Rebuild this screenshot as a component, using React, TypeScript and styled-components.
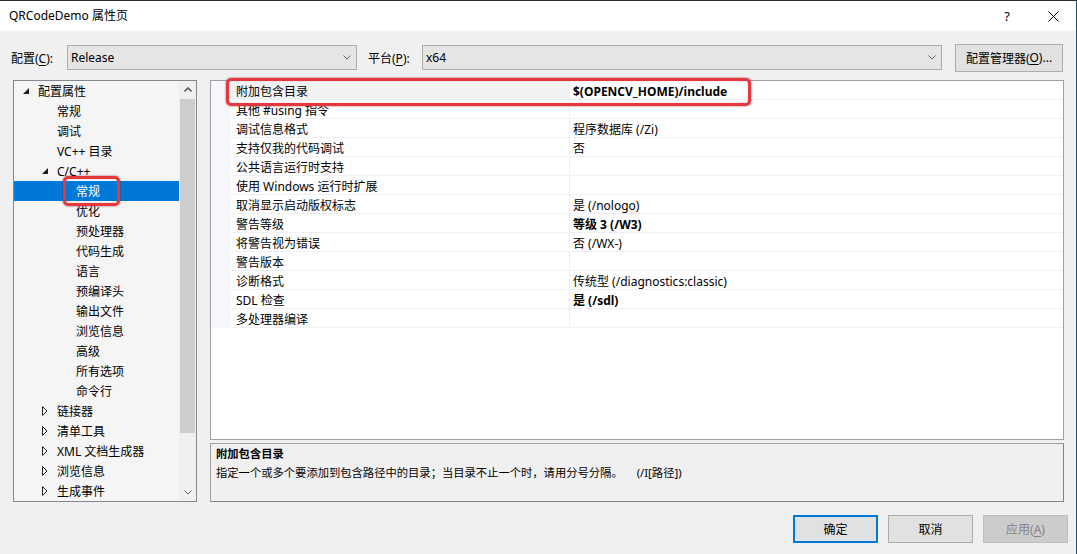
import React from 'react';
import styled, { createGlobalStyle, css } from 'styled-components';

const GlobalStyle = createGlobalStyle`
  html, body { margin: 0; padding: 0; background: #1d4f6e; }
  body {
    font-family: "Noto Sans", "Noto Sans CJK SC", sans-serif;
    font-size: 12px;
    color: #000;
  }
  * { box-sizing: border-box; }
`;

const Window = styled.div`
  width: 1076px;
  height: 554px;
  background: #f0f0f0;
  border-top: 1px solid #2e2e2e;
  display: flex;
  flex-direction: column;
  overflow: hidden;
`;

const TitleBar = styled.div`
  height: 30px;
  background: #fff;
  display: flex;
  align-items: center;
  padding-left: 9px;
  flex: none;
`;

const TitleText = styled.div`
  flex: 1;
  font-size: 12px;
  line-height: 30px;
`;

const CaptionButton = styled.div`
  width: 46px;
  height: 30px;
  display: flex;
  align-items: center;
  justify-content: center;
  font-size: 13px;
`;

const ConfigRow = styled.div`
  display: flex;
  align-items: center;
  height: 27px;
  margin-top: 13px;
  padding-left: 11px;
  flex: none;
`;

const Label = styled.div<{ $w: number; $ml?: number }>`
  width: ${p => p.$w}px;
  margin-left: ${p => p.$ml ?? 0}px;
  flex: none;
  white-space: nowrap;
`;

const U = styled.span`
  text-decoration: underline;
  text-underline-offset: 2px;
`;

const Combo = styled.div<{ $w: number }>`
  width: ${p => p.$w}px;
  height: 25px;
  flex: none;
  background: #e5e5e5;
  border: 1px solid #acacac;
  display: flex;
  align-items: center;
  padding: 0 5px 0 3px;
`;

const ComboText = styled.div`
  flex: 1;
`;

const PushButton = styled.div<{ $w: number; $default?: boolean; $disabled?: boolean; $ml?: number }>`
  width: ${p => p.$w}px;
  height: 28px;
  flex: none;
  margin-left: ${p => p.$ml ?? 0}px;
  background: #e1e1e1;
  border: 1px solid #adadad;
  display: flex;
  align-items: center;
  justify-content: center;
  white-space: nowrap;
  ${p => p.$default && css`
    border: 2px solid #0078d7;
  `}
  ${p => p.$disabled && css`
    background: #cccccc;
    border-color: #bfbfbf;
    color: #838383;
  `}
`;

const Main = styled.div`
  display: flex;
  margin-top: 9px;
  padding-left: 13px;
  gap: 13px;
  flex: none;
`;

const TreePanel = styled.div`
  position: relative;
  width: 184px;
  height: 422px;
  border: 1px solid #828790;
  background: #f5f5f5;
  display: flex;
`;

const TreeList = styled.div`
  flex: 1;
  overflow: hidden;
  display: flex;
  flex-direction: column;
`;

const TreeRow = styled.div<{ $level: number; $selected?: boolean }>`
  height: 20px;
  flex: none;
  display: flex;
  align-items: center;
  padding-left: ${p => 5 + p.$level * 19}px;
  white-space: nowrap;
  ${p => p.$selected && css`
    background: #0078d7;
    color: #fff;
  `}
`;

const ToggleBox = styled.div`
  width: 19px;
  height: 20px;
  flex: none;
  display: flex;
  align-items: center;
  padding-left: 4px;
`;

const ScrollBar = styled.div`
  width: 17px;
  flex: none;
  background: #f0f0f0;
  display: flex;
  flex-direction: column;
`;

const ScrollArrow = styled.div`
  height: 17px;
  flex: none;
  display: flex;
  align-items: center;
  justify-content: center;
`;

const ScrollTrack = styled.div`
  flex: 1;
  padding: 1px 1px 0 1px;
`;

const ScrollThumb = styled.div`
  height: 334px;
  background: #cdcdcd;
`;

const Highlight = styled.div`
  position: absolute;
  border: 3px solid #e5383e;
  border-radius: 5px;
  box-shadow: 0 0 2px rgba(140, 20, 20, 0.8), inset 0 0 1px rgba(140, 20, 20, 0.6);
  pointer-events: none;
`;

const RightColumn = styled.div`
  width: 854px;
  display: flex;
  flex-direction: column;
  gap: 3px;
`;

const GridPanel = styled.div`
  position: relative;
  height: 360px;
  background: #fff;
  border: 1px solid #a0a0a0;
  display: flex;
  flex-direction: column;
`;

const GridRow = styled.div`
  height: 19px;
  display: flex;
  flex: none;
`;

const Gutter = styled.div`
  width: 20px;
  flex: none;
  background: #f5f7fa;
`;

const cellText = css`
  padding-top: 3px;
  line-height: 15px;
  border-bottom: 1px solid #eef0f4;
  white-space: nowrap;
`;

const NameCell = styled.div<{ $active?: boolean }>`
  ${cellText}
  width: 339px;
  flex: none;
  padding-left: 5px;
  border-right: 1px solid #eef0f4;
  background: ${p => (p.$active ? '#f2f2f2' : '#fff')};
`;

const ValueCell = styled.div<{ $bold?: boolean }>`
  ${cellText}
  flex: 1;
  padding-left: 3px;
  font-weight: ${p => (p.$bold ? 700 : 400)};
`;

const DescPanel = styled.div`
  height: 59px;
  background: #f0f0f0;
  border: 1px solid #a0a0a0;
  border-right-color: #838383;
  border-bottom-color: #838383;
  padding: 0 5px;
  font-size: 11.3px;
`;

const DescTitle = styled.div`
  font-weight: 700;
  line-height: 19px;
`;

const DescText = styled.div`
  line-height: 19px;
  white-space: nowrap;
`;

const DescSwitch = styled.span`
  margin-left: 14px;
`;

const Footer = styled.div`
  display: flex;
  justify-content: flex-end;
  gap: 10px;
  margin-top: 13px;
  padding-right: 8px;
  flex: none;
`;

const Chevron = ({ dir, w = 8 }: { dir: 'up' | 'down'; w?: number }) => (
  <svg width={w} height={5} viewBox="0 0 8 5">
    <polyline
      points={dir === 'down' ? '0.5,0.5 4,4 7.5,0.5' : '0.5,4.5 4,1 7.5,4.5'}
      fill="none"
      stroke="#606060"
      strokeWidth={dir === 'down' ? 1 : 1.6}
    />
  </svg>
);

const OpenTriangle = () => (
  <svg width={6} height={6} viewBox="0 0 6 6">
    <polygon points="6,0 6,6 0,6" fill="#1e1e1e" />
  </svg>
);

const ClosedTriangle = () => (
  <svg width={6} height={10} viewBox="0 0 6 10">
    <polygon points="0.5,0.5 5,5 0.5,9.5" fill="none" stroke="#1e1e1e" strokeWidth={1} />
  </svg>
);

const CloseIcon = () => (
  <svg width={11} height={11} viewBox="0 0 11 11">
    <path d="M0.5 0.5 L10.5 10.5 M10.5 0.5 L0.5 10.5" stroke="#000" strokeWidth={1} />
  </svg>
);

type TreeNode = { label: string; level: number; toggle?: 'open' | 'closed'; selected?: boolean };

const leaf2 = ['优化', '预处理器', '代码生成', '语言', '预编译头', '输出文件', '浏览信息', '高级', '所有选项', '命令行'];

const treeNodes: TreeNode[] = [
  { label: '配置属性', level: 0, toggle: 'open' },
  { label: '常规', level: 1 },
  { label: '调试', level: 1 },
  { label: 'VC++ 目录', level: 1 },
  { label: 'C/C++', level: 1, toggle: 'open' },
  { label: '常规', level: 2, selected: true },
  ...leaf2.map(l => ({ label: l, level: 2 })),
  { label: '链接器', level: 1, toggle: 'closed' },
  { label: '清单工具', level: 1, toggle: 'closed' },
  { label: 'XML 文档生成器', level: 1, toggle: 'closed' },
  { label: '浏览信息', level: 1, toggle: 'closed' },
  { label: '生成事件', level: 1, toggle: 'closed' },
];

type Prop = { name: string; value: string; bold?: boolean; active?: boolean };

const properties: Prop[] = [
  { name: '附加包含目录', value: '$(OPENCV_HOME)/include', bold: true, active: true },
  { name: '其他 #using 指令', value: '' },
  { name: '调试信息格式', value: '程序数据库 (/Zi)' },
  { name: '支持仅我的代码调试', value: '否' },
  { name: '公共语言运行时支持', value: '' },
  { name: '使用 Windows 运行时扩展', value: '' },
  { name: '取消显示启动版权标志', value: '是 (/nologo)' },
  { name: '警告等级', value: '等级 3 (/W3)', bold: true },
  { name: '将警告视为错误', value: '否 (/WX-)' },
  { name: '警告版本', value: '' },
  { name: '诊断格式', value: '传统型 (/diagnostics:classic)' },
  { name: 'SDL 检查', value: '是 (/sdl)', bold: true },
  { name: '多处理器编译', value: '' },
];

export default function App() {
  return (
    <>
      <GlobalStyle />
      <Window>
        <TitleBar>
          <TitleText>QRCodeDemo 属性页</TitleText>
          <CaptionButton>?</CaptionButton>
          <CaptionButton>
            <CloseIcon />
          </CaptionButton>
        </TitleBar>

        <ConfigRow>
          <Label $w={56}>
            配置(<U>C</U>):
          </Label>
          <Combo $w={290}>
            <ComboText>Release</ComboText>
            <Chevron dir="down" />
          </Combo>
          <Label $w={54} $ml={11}>
            平台(<U>P</U>):
          </Label>
          <Combo $w={520}>
            <ComboText>x64</ComboText>
            <Chevron dir="down" />
          </Combo>
          <PushButton $w={108} $ml={13}>
            配置管理器(<U>O</U>)...
          </PushButton>
        </ConfigRow>

        <Main>
          <TreePanel>
            <TreeList>
              {treeNodes.map((n, i) => (
                <TreeRow key={i} $level={n.level} $selected={n.selected}>
                  <ToggleBox>
                    {n.toggle === 'open' && <OpenTriangle />}
                    {n.toggle === 'closed' && <ClosedTriangle />}
                  </ToggleBox>
                  {n.label}
                </TreeRow>
              ))}
            </TreeList>
            <ScrollBar>
              <ScrollArrow>
                <Chevron dir="up" />
              </ScrollArrow>
              <ScrollTrack>
                <ScrollThumb />
              </ScrollTrack>
              <ScrollArrow>
                <Chevron dir="down" />
              </ScrollArrow>
            </ScrollBar>
            <Highlight style={{ left: 49, top: 95, width: 57, height: 30 }} />
          </TreePanel>

          <RightColumn>
            <GridPanel>
              {properties.map((p, i) => (
                <GridRow key={i}>
                  <Gutter />
                  <NameCell $active={p.active}>{p.name}</NameCell>
                  <ValueCell $bold={p.bold}>{p.value}</ValueCell>
                </GridRow>
              ))}
              <Highlight style={{ left: 15, top: -3, width: 525, height: 28 }} />
            </GridPanel>
            <DescPanel>
              <DescTitle>附加包含目录</DescTitle>
              <DescText>
                指定一个或多个要添加到包含路径中的目录；当目录不止一个时，请用分号分隔。
                <DescSwitch>(/I[路径])</DescSwitch>
              </DescText>
            </DescPanel>
          </RightColumn>
        </Main>

        <Footer>
          <PushButton $w={85} $default>
            确定
          </PushButton>
          <PushButton $w={85}>取消</PushButton>
          <PushButton $w={85} $disabled>
            应用(<U>A</U>)
          </PushButton>
        </Footer>
      </Window>
    </>
  );
}
